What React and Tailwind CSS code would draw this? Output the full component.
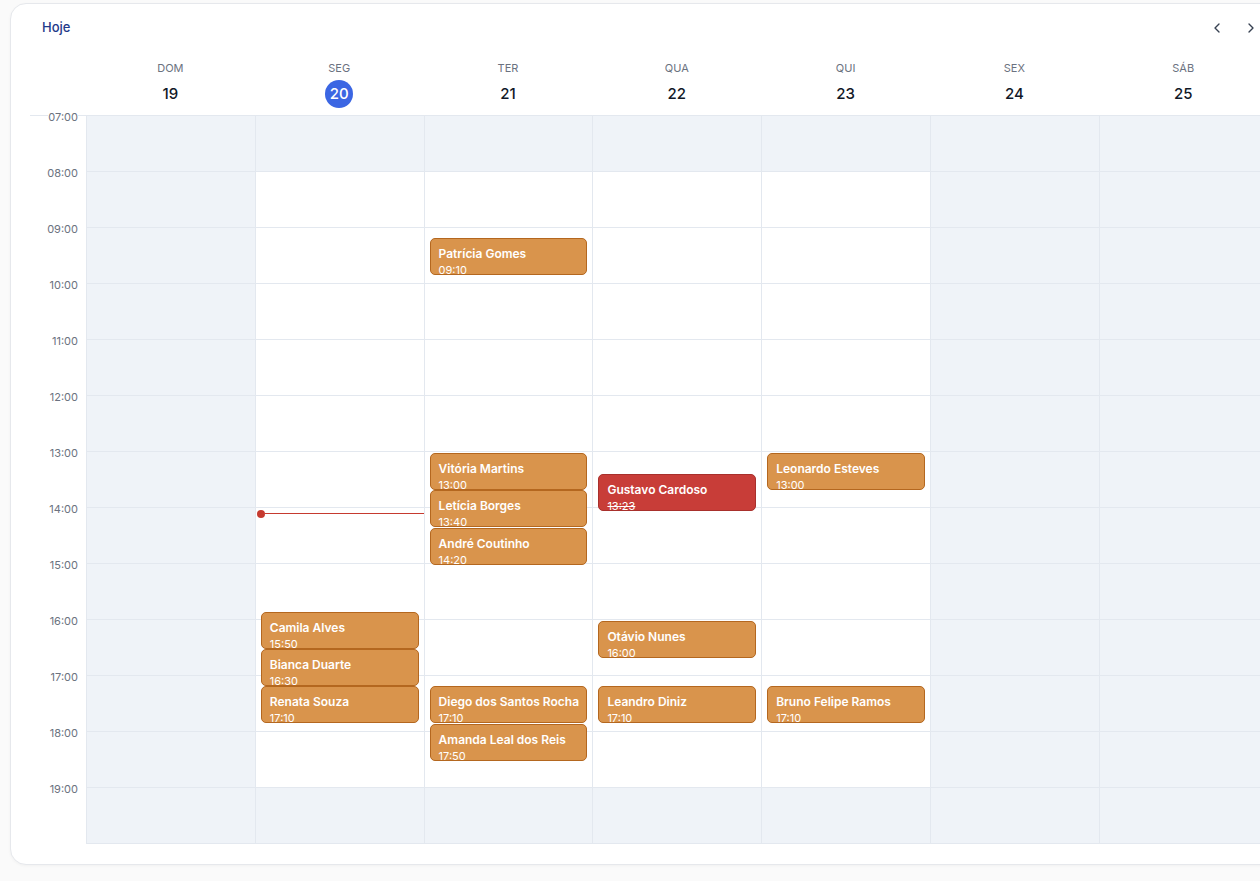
import { ChevronLeft, ChevronRight } from "lucide-react";

const days = [
  { label: "DOM", num: 19, off: true },
  { label: "SEG", num: 20, today: true },
  { label: "TER", num: 21 },
  { label: "QUA", num: 22 },
  { label: "QUI", num: 23 },
  { label: "SEX", num: 24, off: true },
  { label: "SÁB", num: 25, off: true },
];

const hours = [7, 8, 9, 10, 11, 12, 13, 14, 15, 16, 17, 18, 19];

const events = [
  { day: 1, name: "Camila Alves", time: "15:50" },
  { day: 1, name: "Bianca Duarte", time: "16:30" },
  { day: 1, name: "Renata Souza", time: "17:10" },
  { day: 2, name: "Patrícia Gomes", time: "09:10" },
  { day: 2, name: "Vitória Martins", time: "13:00" },
  { day: 2, name: "Letícia Borges", time: "13:40" },
  { day: 2, name: "André Coutinho", time: "14:20" },
  { day: 2, name: "Diego dos Santos Rocha", time: "17:10" },
  { day: 2, name: "Amanda Leal dos Reis", time: "17:50" },
  { day: 3, name: "Gustavo Cardoso", time: "13:23", cancelled: true },
  { day: 3, name: "Otávio Nunes", time: "16:00" },
  { day: 3, name: "Leandro Diniz", time: "17:10" },
  { day: 4, name: "Leonardo Esteves", time: "13:00" },
  { day: 4, name: "Bruno Felipe Ramos", time: "17:10" },
];

const HOUR = 56;

function offsetOf(time) {
  const [h, m] = time.split(":").map(Number);
  return (h - 7) * HOUR + (m / 60) * HOUR;
}

function EventCard({ ev }) {
  const top = offsetOf(ev.time) + 1;
  return (
    <div
      className={
        "absolute left-[5px] right-[5px] h-[37px] overflow-hidden rounded-[5px] border px-2 pt-[6px] text-white " +
        (ev.cancelled ? "bg-[#c83d38] border-[#a8302c]" : "bg-[#d9944c] border-[#b4671f]")
      }
      style={{ top }}
    >
      <div className="text-[12px] font-semibold leading-[18px] whitespace-nowrap">{ev.name}</div>
      <div className={"text-[11px] leading-[14px] " + (ev.cancelled ? "line-through" : "")}>{ev.time}</div>
    </div>
  );
}

function DayColumn({ day, index }) {
  const dayEvents = events.filter((e) => e.day === index);
  return (
    <div className="relative w-[168.8px] shrink-0 border-r border-[#e3e8ef]">
      {hours.map((h) => {
        const gray = day.off || h === 7 || h === 19;
        return (
          <div
            key={h}
            className={"h-[56px] border-b border-[#e3e8ef] " + (gray ? "bg-[#eff3f8]" : "bg-white")}
          />
        );
      })}
      {dayEvents.map((ev) => (
        <EventCard key={ev.name} ev={ev} />
      ))}
      {day.today && (
        <div className="absolute left-[1px] right-0 flex items-center" style={{ top: offsetOf("14:05") - 3 }}>
          <div className="h-[8px] w-[8px] rounded-full bg-[#c63a2f]" />
          <div className="h-px flex-1 bg-[#c63a2f]" />
        </div>
      )}
    </div>
  );
}

export default function App() {
  return (
    <div className="min-h-[881px] w-[1260px] overflow-hidden bg-[#fafafa] pt-[3px] pl-[10px]" style={{ fontFamily: "Inter, 'Noto Sans', sans-serif" }}>
      <div className="w-[1290px] rounded-2xl border border-[#e6e8ec] bg-white pb-[20px] shadow-[0_1px_3px_rgba(0,0,0,0.04)]">
        <div className="flex h-[48px] items-center">
          <button className="ml-[31px] text-[13px] font-medium text-[#1f3a8a]">Hoje</button>
          <div className="ml-auto mr-[40px] flex items-center gap-[18px] text-[#374151]">
            <ChevronLeft size={16} strokeWidth={2} />
            <ChevronRight size={16} strokeWidth={2} />
          </div>
        </div>

        <div className="ml-[19px] flex h-[64px] border-b border-[#e3e8ef]">
          <div className="w-[56px] shrink-0" />
          {days.map((d) => (
            <div key={d.label} className="flex w-[168.8px] shrink-0 flex-col items-center pt-[9px]">
              <div className="text-[11px] leading-[14px] text-[#6b7280]">{d.label}</div>
              <div
                className={
                  "mt-[5px] flex h-[28px] w-[28px] items-center justify-center rounded-full text-[15px] font-medium " +
                  (d.today ? "bg-[#3b66e3] text-white" : "text-[#111827]")
                }
              >
                {d.num}
              </div>
            </div>
          ))}
        </div>

        <div className="flex">
          <div className="w-[75px] shrink-0">
            {hours.map((h) => (
              <div key={h} className="relative h-[56px]">
                <div className="absolute right-[8px] top-[-7px] bg-white text-[11px] leading-[16px] text-[#6b7280]">
                  {String(h).padStart(2, "0")}:00
                </div>
              </div>
            ))}
          </div>
          <div className="flex border-l border-[#e3e8ef]">
            {days.map((d, i) => (
              <DayColumn key={d.label} day={d} index={i} />
            ))}
          </div>
        </div>
      </div>
    </div>
  );
}
